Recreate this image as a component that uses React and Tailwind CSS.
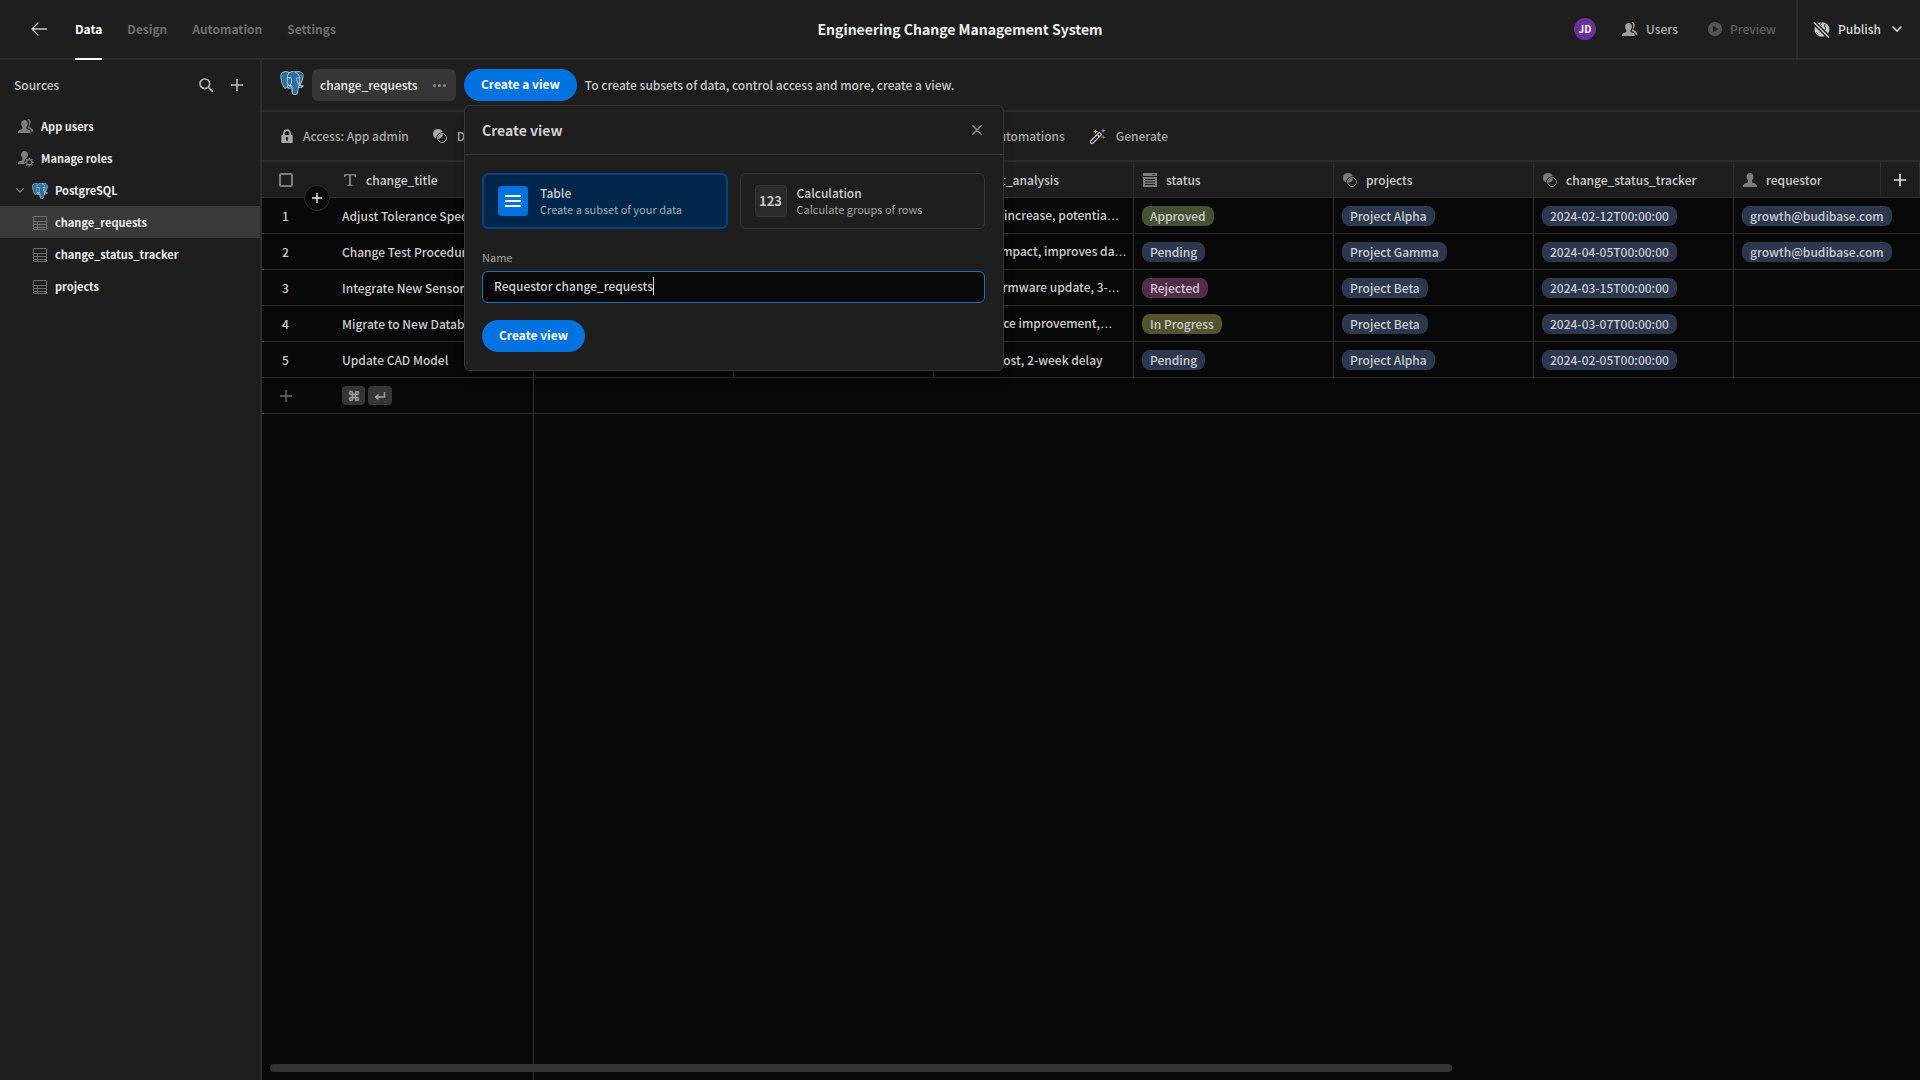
import { SiPostgresql } from "react-icons/si";

const FONT = "font-['Noto_Sans_CJK_KR',sans-serif]";

function Postgres({ className }) {
  return (
    <span className={`relative inline-block shrink-0 ${className}`}>
      <svg viewBox="0 0 24 24" className="absolute inset-0 h-full w-full" aria-hidden="true">
        <path
          fill="#2f6f9c"
          d="M5 .8C2 1 .6 3.400.7 6c.1 3 1.800 8.500 4 10.200.8.500 1.500.2 2.200-.6l1.600.5c.6.800 1.700 1 2.700.8.200 2.300.1 6.300 2.900 6.300 2.600 0 3.600-2 3.700-4.500l.3-2.700c1.700.3 4.200-.3 5.200-1.600l-2.500-.6C23 10.500 24 6.500 23 4.500 20.500.8 17.500.3 14.500 1.300 11.500.2 10 .7 9 1.300 7.500.8 6.300.6 5 .8z"
        />
      </svg>
      <SiPostgresql className="absolute inset-0 h-full w-full text-[#c3d8e6]" aria-hidden="true" />
    </span>
  );
}

function UsersIcon({ className }) {
  return (
    <svg viewBox="0 0 18 18" className={className} fill="currentColor" aria-hidden="true">
      <path d="M8 2c2.300 0 3.500 1.700 3.500 3.900 0 1.500-.6 3-1.500 3.900v1.300c0 .5.300.8.800.9 2.300.5 3.700 1.500 3.700 3.500v.5H1v-.5c0-2 1.600-3 3.900-3.500.5-.1.800-.4.800-.9V9.800c-.8-.9-1.300-2.400-1.300-3.900C4.400 3.700 5.600 2 8 2z" />
      <path d="M11 1.200c2.200-.3 3.500 1.300 3.500 3.400 0 1.400-.5 2.700-1.300 3.500v1c0 .5.300.8.800 1 1.900.8 3.200 1.900 3.400 4.400h-1.800c-.2-1.900-1.700-3-4-3.600-.2-.1-.3-.2-.3-.4 1-1.200 1.600-2.900 1.600-4.600 0-2-.7-3.700-1.900-4.700z" />
    </svg>
  );
}

function UserGearIcon({ className }) {
  return (
    <svg viewBox="0 0 18 18" className={className} aria-hidden="true">
      <path
        fill="currentColor"
        d="M8 1c2.300 0 3.500 1.600 3.500 3.700 0 1.400-.5 2.800-1.300 3.700-1.400 1-2.200 2.400-2.200 4.200 0 .8.200 1.600.5 2.400H1v-.6c0-1.900 1.600-2.900 3.900-3.400.5-.1.800-.4.800-.9V8.400C4.900 7.500 4.500 6.100 4.500 4.700 4.500 2.600 5.600 1 8 1z"
      />
      <circle cx="13" cy="13" r="2.800" fill="none" stroke="currentColor" strokeWidth="1.300" />
      <path
        stroke="currentColor"
        strokeWidth="1.500"
        d="M13 8.300v2M13 15.700v2M8.300 13h2M15.700 13h2M9.700 9.700l1.400 1.400M14.900 14.900l1.400 1.400M9.700 16.300l1.400-1.400M14.900 11.100l1.400-1.400"
      />
    </svg>
  );
}

function UserIcon({ className }) {
  return (
    <svg viewBox="0 0 14 14" className={className} fill="currentColor" aria-hidden="true">
      <path d="M7 0c2.300 0 3.400 1.600 3.400 3.700 0 1.500-.5 2.900-1.400 3.800v1.300c0 .5.300.8.700.9C12.400 10.200 14 11.200 14 13.200v.8H0v-.8c0-2 1.700-3 4.300-3.500.4-.1.700-.4.7-.9V7.500c-.9-.9-1.400-2.300-1.400-3.800C3.600 1.600 4.700 0 7 0z" />
    </svg>
  );
}

function TableIcon({ className }) {
  return (
    <svg viewBox="0 0 14 14" className={className} fill="none" stroke="currentColor" aria-hidden="true">
      <path d="M.5.5h13v13H.5zM.5 5.500h13M.5 8.500h13M.5 11.500h13M4.500 5.500v8" />
    </svg>
  );
}

function RelationIcon({ className }) {
  return (
    <svg viewBox="0 0 14 14" className={className} aria-hidden="true">
      <path fill="currentColor" d="M5 0a5 5 0 0 1 4.700 3.300A5.800 5.800 0 0 0 3.300 9.700 5 5 0 0 1 5 0z" />
      <circle cx="9" cy="9" r="4.500" fill="none" stroke="currentColor" strokeWidth="1" />
      <path fill="currentColor" d="M9.900 4.900A5 5 0 0 1 4.900 9.900 4.600 4.600 0 0 1 9.900 4.900z" />
    </svg>
  );
}

function OptionsIcon({ className }) {
  return (
    <svg viewBox="0 0 14 14" className={className} aria-hidden="true">
      <path fill="currentColor" fillRule="evenodd" d="M0 0h14v3H0zM9 1l1.500 1.300L12 1zM0 4h14v10H0zM2 6v1h10V6zM2 8.500v1h10v-1zM2 11v1h10v-1z" />
    </svg>
  );
}

function TextTypeIcon({ className }) {
  return (
    <svg viewBox="0 0 12 12" className={className} fill="currentColor" aria-hidden="true">
      <path d="M0 0h12v3.300h-1.200C10.600 2 10.200 1.500 9 1.500H7v8c0 .9.300 1.200 1.500 1.300V12h-5v-1.200C4.700 10.700 5 10.400 5 9.500v-8H3C1.800 1.500 1.400 2 1.200 3.300H0z" />
    </svg>
  );
}

function LockIcon({ className }) {
  return (
    <svg viewBox="0 0 12 14" className={className} aria-hidden="true">
      <path
        fill="currentColor"
        fillRule="evenodd"
        d="M1 6h1V4.500C2 2 3.600.3 6 .3S10 2 10 4.500V6h1a.7.700 0 0 1 .7.700v6.600a.7.700 0 0 1-.7.700H1a.7.700 0 0 1-.7-.7V6.700A.7.700 0 0 1 1 6zm2.800 0h4.400V4.500C8.200 3 7.400 2 6 2S3.800 3 3.800 4.500zM6 8a1.300 1.300 0 0 0-.7 2.400V12h1.400v-1.600A1.300 1.300 0 0 0 6 8z"
      />
    </svg>
  );
}

function WandIcon({ className }) {
  return (
    <svg viewBox="0 0 18 18" className={className} fill="none" aria-hidden="true">
      <path d="M1.800 13.800 11 4.600l2.300 2.300-9.200 9.200c-1.600 1-3.300-.7-2.300-2.300z" stroke="#c8c8c8" strokeWidth="1.300" />
      <path d="m8.600 7 2.300 2.300" stroke="#c8c8c8" strokeWidth="1.300" />
      <path d="M7 1.200 7.700 3l1.700.7-1.700.7L7 6.200l-.7-1.800-1.700-.7L6.300 3z" fill="#d9c53c" />
      <path d="m15 .2.800 1.900 1.900.8-1.900.8-.8 1.900-.8-1.900-1.900-.8 1.900-.8z" fill="#6d84e8" />
      <path d="m15.200 7.200.7 1.800 1.700.7-1.700.7-.7 1.700-.7-1.700-1.700-.7 1.700-.7z" fill="#e2563f" />
    </svg>
  );
}

function GlobeStrikeIcon({ className }) {
  return (
    <svg viewBox="0 0 18 18" className={className} aria-hidden="true">
      <circle cx="9.500" cy="9" r="7.800" fill="currentColor" />
      <path d="M9 1.500 8 3.500l1.500 2M13 3l-1 2.500 1.500 2-1 2M4 12l1.500 2.500" fill="none" stroke="#1e1e1e" strokeWidth="1" />
      <path d="M1 1.500 17 17.500" stroke="#1e1e1e" strokeWidth="4.500" />
      <path d="M1 1.500 17 17.500" stroke="currentColor" strokeWidth="1.600" />
    </svg>
  );
}

function PlusIcon({ className, weight = 2 }) {
  return (
    <svg viewBox="0 0 12 12" className={className} stroke="currentColor" strokeWidth={weight} aria-hidden="true">
      <path d="M6 0v12M0 6h12" />
    </svg>
  );
}

function Chevron({ className }) {
  return (
    <svg viewBox="0 0 10 6" className={className} fill="none" stroke="currentColor" strokeWidth="1.600" strokeLinecap="round" aria-hidden="true">
      <path d="m1 1 4 4 4-4" />
    </svg>
  );
}

const BLUE = "bg-[#2d384f]";

const columns = [
  { name: "change_title", Icon: TextTypeIcon },
  { name: "description", Icon: TextTypeIcon },
  { name: "reason", Icon: TextTypeIcon },
  { name: "impact_analysis", Icon: TextTypeIcon },
  { name: "status", Icon: OptionsIcon },
  { name: "projects", Icon: RelationIcon },
  { name: "change_status_tracker", Icon: RelationIcon },
  { name: "requestor", Icon: UserIcon },
];

const rows = [
  { title: "Adjust Tolerance Specs", impact: "Minor cost increase, potentia", more: true, status: "Approved", tone: "bg-[#445231]", project: "Project Alpha", date: "2024-02-12T00:00:00", who: "growth@budibase.com" },
  { title: "Change Test Procedure", impact: "Schedule impact, improves da", more: true, status: "Pending", tone: BLUE, project: "Project Gamma", date: "2024-04-05T00:00:00", who: "growth@budibase.com" },
  { title: "Integrate New Sensor", impact: "Requires firmware update, 3-", more: true, status: "Rejected", tone: "bg-[#532c4b]", project: "Project Beta", date: "2024-03-15T00:00:00" },
  { title: "Migrate to New Database", impact: "Performance improvement,", more: true, status: "In Progress", tone: "bg-[#535330]", project: "Project Beta", date: "2024-03-07T00:00:00" },
  { title: "Update CAD Model", impact: "Standard cost, 2-week delay", status: "Pending", tone: BLUE, project: "Project Alpha", date: "2024-02-05T00:00:00" },
];

function Badge({ tone = BLUE, children }) {
  return (
    <span className={`inline-flex h-5 items-center rounded-lg px-2 whitespace-nowrap ${tone}`}>{children}</span>
  );
}

/* The dots use a face that sets them on the baseline; the CJK face centres them. */
function Summary({ text, more }) {
  return (
    <span className="flex items-baseline whitespace-nowrap">
      {text}
      {more && <span className="font-['DejaVu_Sans',sans-serif] leading-4">…</span>}
    </span>
  );
}

function Cell({ children, last }) {
  return (
    <td className={`h-9 border-b border-[#2c2c2c] px-2 py-0 ${last ? "" : "border-r"}`}>
      <div className="flex items-center">{children}</div>
    </td>
  );
}

function TopBar() {
  return (
    <header className="grid h-[60px] shrink-0 grid-cols-[1fr_auto_1fr] border-b-2 border-[#2c2c2c]">
      <div className="flex items-center pl-[31px]">
        <button type="button" aria-label="Back" className="mr-7 text-[#c8c8c8]">
          <svg viewBox="0 0 16 14" className="h-3.5 w-4" fill="none" stroke="currentColor" strokeWidth="1.300" strokeLinecap="round" strokeLinejoin="round">
            <path d="M15.300 7H1M7 1 1 7l6 6" />
          </svg>
        </button>
        <nav className="-mb-0.5 flex gap-[25px] self-stretch text-xs font-bold text-[#6e6e6e]">
          <a href="#data" className="flex items-center border-b-2 border-white text-white">Data</a>
          <a href="#design" className="flex items-center pb-0.5">Design</a>
          <a href="#automation" className="flex items-center pb-0.5">Automation</a>
          <a href="#settings" className="flex items-center pb-0.5">Settings</a>
        </nav>
      </div>
      <h1 className="flex items-center text-sm font-bold text-[#f0f0f0]">Engineering Change Management System</h1>
      <div className="flex items-center justify-end text-xs font-medium">
        <span className="flex size-[22px] items-center justify-center rounded-full bg-[#67309a] text-[10px] font-bold text-white">JD</span>
        <button type="button" className="ml-[25px] flex items-center gap-2 text-[#b4b4b4]">
          <UsersIcon className="size-[17px] text-[#a0a0a0]" />
          Users
        </button>
        <button type="button" disabled className="ml-[30px] flex items-center gap-2 text-[#5e5e5e]">
          <svg viewBox="0 0 14 14" className="size-3.5" aria-hidden="true">
            <path fill="#555" fillRule="evenodd" d="M7 0a7 7 0 1 1 0 14A7 7 0 0 1 7 0zM5 3.800v6.400L10.300 7z" />
          </svg>
          Preview
        </button>
        <div className="ml-5 flex items-center self-stretch border-l-2 border-[#2c2c2c] pr-[18px] pl-[15px]">
          <button type="button" className="flex items-center gap-2 text-[#dcdcdc]">
            <GlobeStrikeIcon className="size-[17px] text-[#c8c8c8]" />
            Publish
            <Chevron className="ml-[3px] w-2.5" />
          </button>
        </div>
      </div>
    </header>
  );
}

function SourceItem({ icon, label, nested, selected }) {
  return (
    <li>
      <a
        href={`#${label}`}
        className={`flex h-8 items-center pt-px text-[11px] font-bold text-[#ececec] ${nested ? "gap-2 pl-[33px]" : "gap-[7px] pl-[17px]"} ${selected ? "bg-[#3a3a3a]" : ""}`}
      >
        {icon}
        {label}
      </a>
    </li>
  );
}

function Sidebar() {
  return (
    <aside className="w-[262px] shrink-0 border-r-2 border-[#2c2c2c]">
      <div className="flex h-[50px] items-center pr-[17px] pl-3.5 text-[#b8b8b8]">
        <h2 className="flex-1 text-xs font-medium text-[#c8c8c8]">Sources</h2>
        <button type="button" aria-label="Search" className="mr-[18px]">
          <svg viewBox="0 0 14 14" className="size-3.5" fill="none" stroke="currentColor" strokeWidth="1.700" strokeLinecap="round">
            <circle cx="5.800" cy="5.800" r="4.800" />
            <path d="m9.500 9.500 3.700 3.700" />
          </svg>
        </button>
        <button type="button" aria-label="Add source">
          <PlusIcon className="size-3" weight={1.6} />
        </button>
      </div>
      <ul>
        <SourceItem icon={<UsersIcon className="size-[17px] text-[#7c7c7c]" />} label="App users" />
        <SourceItem icon={<UserGearIcon className="size-[17px] text-[#7c7c7c]" />} label="Manage roles" />
        <li>
          <button type="button" aria-expanded="true" className="flex h-8 w-full items-center pt-px pl-4 text-[11px] font-bold text-[#ececec]">
            <Chevron className="mr-2 w-2 text-[#8a8a8a]" />
            <Postgres className="mr-[7px] size-4" />
            PostgreSQL
          </button>
        </li>
        <SourceItem nested selected icon={<TableIcon className="size-3.5 text-[#6e6e6e]" />} label="change_requests" />
        <SourceItem nested icon={<TableIcon className="size-3.5 text-[#6e6e6e]" />} label="change_status_tracker" />
        <SourceItem nested icon={<TableIcon className="size-3.5 text-[#6e6e6e]" />} label="projects" />
      </ul>
    </aside>
  );
}

function CreateViewPopover() {
  return (
    <form
      role="dialog"
      aria-label="Create view"
      onSubmit={(e) => e.preventDefault()}
      className="absolute top-full left-0 z-30 mt-1 w-[540px] rounded-md border border-[#363636] bg-[#1e1e1e] shadow-lg"
    >
      <div className="flex h-[49px] items-center justify-between border-b border-[#363636] px-[17px]">
        <h2 className="text-sm font-bold text-[#d0d0d0]">Create view</h2>
        <button type="button" aria-label="Close" className="mr-1 text-[#8a8a8a]">
          <svg viewBox="0 0 10 10" className="size-2.5" stroke="currentColor" strokeWidth="1.500" strokeLinecap="round">
            <path d="m.8.800 8.400 8.400M9.200.8.800 9.200" />
          </svg>
        </button>
      </div>
      <div className="py-[18px] pr-[18px] pl-[17px]">
        <div className="grid grid-cols-2 gap-3">
          <button type="button" aria-pressed="true" className="flex h-14 items-center gap-3 rounded-md border-2 border-[#004487] bg-[#00264c] px-3.5 text-left">
            <span className="flex size-[30px] items-center justify-center rounded-sm bg-[#0073e0]">
              <svg viewBox="0 0 16 14" className="h-3.5 w-4 text-white" fill="currentColor" aria-hidden="true">
                <path d="M0 1h16v2H0zM0 6h16v2H0zM0 11h16v2H0z" />
              </svg>
            </span>
            <span>
              <span className="block text-xs leading-4 font-medium text-[#d0d0d0]">Table</span>
              <span className="block text-[11px] leading-4 text-[#a4acb4]">Create a subset of your data</span>
            </span>
          </button>
          <button type="button" aria-pressed="false" className="flex h-14 items-center gap-2.5 rounded-md border border-[#363636] px-3.5 text-left">
            <span className="flex size-8 items-center justify-center rounded-sm border border-[#363636] bg-[#2a2a2a] text-[13px] font-bold text-[#c8c8c8]">123</span>
            <span>
              <span className="block text-xs leading-4 font-medium text-[#d0d0d0]">Calculation</span>
              <span className="block text-[11px] leading-4 text-[#a4a4a4]">Calculate groups of rows</span>
            </span>
          </button>
        </div>
        <label htmlFor="view-name" className="mt-5 block text-[11px] leading-4 text-[#a0a0a0]">Name</label>
        <div className="mt-[6px] flex h-8 items-center rounded-md border border-[#1473c0] bg-[#080808] px-[11px] pb-0.5">
          <input
            id="view-name"
            defaultValue="Requestor change_requests"
            className="field-sizing-content bg-transparent text-xs font-medium text-[#d0d0d0] outline-none"
          />
          <span className="h-[18px] w-px bg-[#e0e0e0]" />
        </div>
        <button type="submit" className="mt-[17px] flex h-8 items-center rounded-full bg-[#0073e0] px-[17px] pb-0.5 text-xs font-bold text-white">
          Create view
        </button>
      </div>
    </form>
  );
}

function ViewBar() {
  return (
    <div className="flex h-[52px] shrink-0 items-center border-b-2 border-[#2c2c2c] pl-[18px] text-xs">
      <Postgres className="mr-2 mb-1 size-6" />
      <div className="mr-2 flex h-8 w-36 items-center justify-between rounded-md bg-[#363636] pr-2.5 pl-2 font-medium text-[#ececec]">
        change_requests
        <button type="button" aria-label="Table options" className="flex gap-0.5">
          <span className="size-[3px] rounded-full bg-[#8a8a8a]" />
          <span className="size-[3px] rounded-full bg-[#8a8a8a]" />
          <span className="size-[3px] rounded-full bg-[#8a8a8a]" />
        </button>
      </div>
      <div className="relative mr-2">
        <button type="button" className="flex h-8 items-center rounded-full bg-[#0073e0] px-[17px] pb-0.5 font-bold text-white">Create a view</button>
        <CreateViewPopover />
      </div>
      <p className="font-medium text-[#c8c8c8]">To create subsets of data, control access and more, create a view.</p>
    </div>
  );
}

function Tool({ icon, children }) {
  return (
    <button type="button" className="flex items-center gap-2.5 whitespace-nowrap">
      {icon}
      {children}
    </button>
  );
}

function ToolBar() {
  return (
    <div className="flex h-[50px] shrink-0 items-center gap-6 border-b-2 border-[#2c2c2c] pl-[19px] text-xs font-medium text-[#a8a8a8]">
      <Tool icon={<LockIcon className="h-3.5 w-3" />}>Access: App admin</Tool>
      <div className="flex w-[632px] justify-between">
        <Tool icon={<RelationIcon className="size-3.5" />}>Define relationship</Tool>
        <Tool>Automations</Tool>
      </div>
      <Tool icon={<WandIcon className="size-[17px]" />}>Generate</Tool>
    </div>
  );
}

function Grid() {
  return (
    <div className="relative min-h-0 flex-1 overflow-hidden bg-[#080808]">
      <table className="w-[1672px] table-fixed border-separate border-spacing-0 text-xs font-medium text-[#cdcdcd]">
        <colgroup>
          <col className="w-[72px]" />
          {columns.map((c) => (
            <col key={c.name} className="w-[200px]" />
          ))}
        </colgroup>
        <thead className="bg-[#1e1e1e]">
          <tr>
            <th className="h-9 border-b border-[#2c2c2c] p-0">
              <input type="checkbox" aria-label="Select all rows" className="ml-[17px] block size-3.5 appearance-none rounded-xs border-2 border-[#7c7c7c]" />
            </th>
            {columns.map(({ name, Icon }, i) => (
              <th key={name} className={`h-9 border-b border-[#2c2c2c] p-0 text-left font-medium ${i < 7 ? "border-r" : ""}`}>
                <span className="flex items-center">
                  <span className="flex w-8 justify-center">
                    <Icon className={`text-[#7c7c7c] ${Icon === TextTypeIcon ? "size-3" : "size-3.5"}`} />
                  </span>
                  {name}
                </span>
              </th>
            ))}
          </tr>
        </thead>
        <tbody>
          {rows.map((r, i) => (
            <tr key={r.title}>
              <td className="h-9 border-b border-[#2c2c2c] p-0">
                <span className="block w-[47px] text-center">{i + 1}</span>
              </td>
              <Cell>{r.title}</Cell>
              <Cell />
              <Cell />
              <Cell><Summary text={r.impact} more={r.more} /></Cell>
              <Cell><Badge tone={r.tone}>{r.status}</Badge></Cell>
              <Cell><Badge>{r.project}</Badge></Cell>
              <Cell><Badge>{r.date}</Badge></Cell>
              <Cell last>{r.who && <Badge>{r.who}</Badge>}</Cell>
            </tr>
          ))}
          <tr>
            <td className="h-9 border-b border-[#2c2c2c] p-0">
              <button type="button" aria-label="Add row" className="ml-[18px] block text-[#6e6e6e]">
                <PlusIcon className="size-3" weight={1.3} />
              </button>
            </td>
            <td colSpan={8} className="h-9 border-b border-[#2c2c2c] px-2 py-0">
              <div className="flex gap-[3px] text-[#a0a0a0]">
                <kbd className="flex h-[19px] w-[23px] items-center justify-center rounded-sm bg-[#363636]">
                  <svg viewBox="0 0 24 24" className="size-3" fill="none" stroke="currentColor" strokeWidth="3" aria-hidden="true">
                    <path d="M15 6v12a3 3 0 1 0 3-3H6a3 3 0 1 0 3 3V6a3 3 0 1 0-3 3h12a3 3 0 1 0-3-3" />
                  </svg>
                </kbd>
                <kbd className="flex h-[19px] w-6 items-center justify-center rounded-sm bg-[#363636]">
                  <svg viewBox="0 0 12 10" className="h-2.5 w-3" aria-hidden="true">
                    <path d="M10.500 1v5H3" fill="none" stroke="currentColor" strokeWidth="1.500" />
                    <path d="M4.500 2.500v7L.5 6z" fill="currentColor" />
                  </svg>
                </kbd>
              </div>
            </td>
          </tr>
        </tbody>
      </table>
      <div className="absolute inset-y-0 left-[271px] w-px bg-[#2c2c2c]" />
      <button type="button" aria-label="Insert row" className="absolute top-[23px] left-[42px] flex size-[26px] items-center justify-center rounded-full border border-[#2c2c2c] bg-[#080808] text-[#ececec]">
        <PlusIcon className="size-2.5" weight={1.7} />
      </button>
      <button type="button" aria-label="Add column" className="absolute top-0 right-0 flex h-9 w-10 items-center justify-center border-x border-b border-[#2c2c2c] bg-[#1e1e1e] text-[#dcdcdc]">
        <PlusIcon className="size-3" weight={1.7} />
      </button>
      <div className="absolute inset-x-2 bottom-2">
        <div className="h-2 w-[72%] rounded-full bg-[#343434]" />
      </div>
    </div>
  );
}

export default function App() {
  return (
    <div className={`flex h-screen flex-col bg-[#1e1e1e] ${FONT}`}>
      <TopBar />
      <div className="flex min-h-0 flex-1">
        <Sidebar />
        <main className="flex min-w-0 flex-1 flex-col">
          <ViewBar />
          <ToolBar />
          <Grid />
        </main>
      </div>
    </div>
  );
}
